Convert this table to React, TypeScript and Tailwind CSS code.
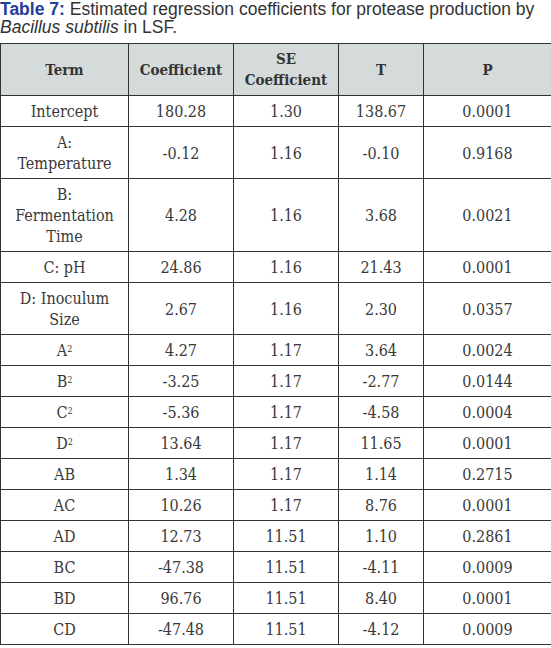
const rows: [React.ReactNode, string, string, string, string][] = [
  ["Intercept", "180.28", "1.30", "138.67", "0.0001"],
  [<>A:<br />Temperature</>, "-0.12", "1.16", "-0.10", "0.9168"],
  [<>B:<br />Fermentation<br />Time</>, "4.28", "1.16", "3.68", "0.0021"],
  ["C: pH", "24.86", "1.16", "21.43", "0.0001"],
  [<>D: Inoculum<br />Size</>, "2.67", "1.16", "2.30", "0.0357"],
  [<>A<sup className="text-[9px]">2</sup></>, "4.27", "1.17", "3.64", "0.0024"],
  [<>B<sup className="text-[9px]">2</sup></>, "-3.25", "1.17", "-2.77", "0.0144"],
  [<>C<sup className="text-[9px]">2</sup></>, "-5.36", "1.17", "-4.58", "0.0004"],
  [<>D<sup className="text-[9px]">2</sup></>, "13.64", "1.17", "11.65", "0.0001"],
  ["AB", "1.34", "1.17", "1.14", "0.2715"],
  ["AC", "10.26", "1.17", "8.76", "0.0001"],
  ["AD", "12.73", "11.51", "1.10", "0.2861"],
  ["BC", "-47.38", "11.51", "-4.11", "0.0009"],
  ["BD", "96.76", "11.51", "8.40", "0.0001"],
  ["CD", "-47.48", "11.51", "-4.12", "0.0009"],
];

const cell = "border border-[#333] text-center align-middle pt-[5px] pb-[4px] px-1";

export default function App() {
  return (
    <div className="w-[551px] bg-white">
      {/* Caption */}
      <div className="text-[17.5px] leading-[18px] text-[#333] mb-[7px]" style={{ fontFamily: '"Liberation Sans", Arial, sans-serif' }}>
        <div className="whitespace-nowrap">
          <span className="font-bold text-[#22409a]">Table 7:</span> Estimated regression coefficients for protease production by
        </div>
        <div className="whitespace-nowrap">
          <i>Bacillus subtilis</i> in LSF.
        </div>
      </div>

      {/* Table */}
      <table
        className="w-[551px] border-collapse table-fixed text-[16px] leading-[21px] text-[#3a3a3a] font-stretch-condensed"
        style={{ fontFamily: '"DejaVu Serif Condensed", "DejaVu Serif", "Liberation Serif", serif' }}
      >
        <colgroup>
          <col className="w-[128px]" />
          <col className="w-[105px]" />
          <col className="w-[105px]" />
          <col className="w-[85px]" />
          <col className="w-[128px]" />
        </colgroup>
        <thead>
          <tr className="bg-[#d5dbdb] font-bold text-[15px] text-[#333]">
            <th className={cell}>Term</th>
            <th className={cell}>Coefficient</th>
            <th className={cell}>SE<br />Coefficient</th>
            <th className={cell}>T</th>
            <th className={cell}>P</th>
          </tr>
        </thead>
        <tbody>
          {rows.map((r, i) => (
            <tr key={i}>
              {r.map((c, j) => (
                <td key={j} className={cell}>{c}</td>
              ))}
            </tr>
          ))}
        </tbody>
      </table>
    </div>
  );
}
